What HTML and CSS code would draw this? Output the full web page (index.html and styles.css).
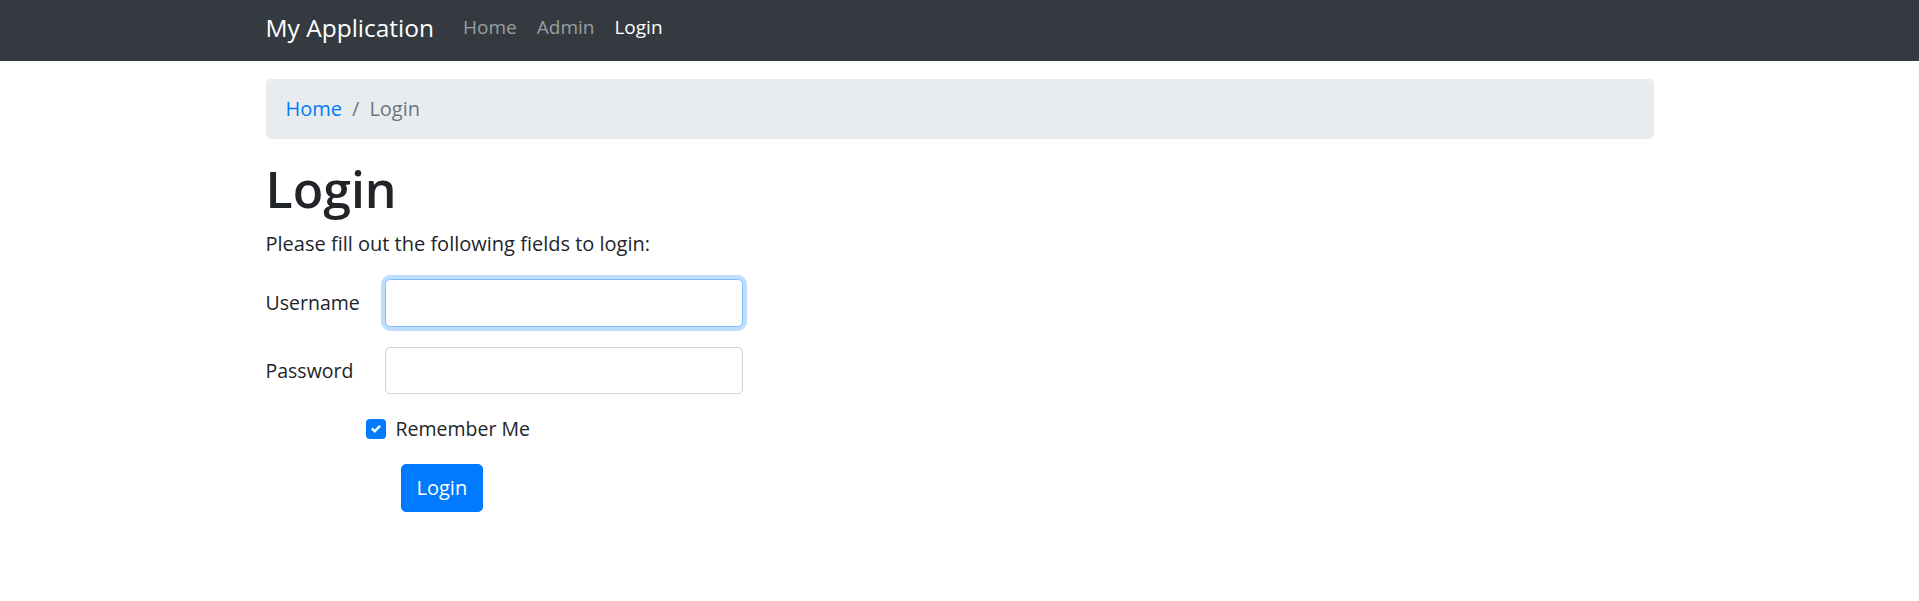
FILE: index.html
```html
<!DOCTYPE html>
<html lang="en">
<head>
<meta charset="utf-8">
<title>Login</title>
<link rel="stylesheet" href="styles.css">
</head>
<body>
<nav class="navbar">
  <div class="container nav-inner">
    <a class="brand" href="#">My Application</a>
    <ul class="nav">
      <li><a class="nav-link" href="#">Home</a></li>
      <li><a class="nav-link" href="#">Admin</a></li>
      <li><a class="nav-link active" href="#">Login</a></li>
    </ul>
  </div>
</nav>
<main class="container">
  <ol class="breadcrumb">
    <li><a href="#">Home</a></li>
    <li class="sep">/</li>
    <li class="current">Login</li>
  </ol>
  <h1 class="title">Login</h1>
  <p class="lead">Please fill out the following fields to login:</p>
  <form class="login-form">
    <div class="form-group">
      <label class="col-label" for="u">Username</label>
      <input class="form-control focused" id="u" type="text">
    </div>
    <div class="form-group">
      <label class="col-label" for="p">Password</label>
      <input class="form-control" id="p" type="password">
    </div>
    <div class="form-group check-row">
      <span class="checkbox"><svg viewBox="0 0 8 8" width="10" height="10"><path fill="#fff" d="M6.564.75l-3.59 3.612-1.538-1.55L0 4.26 2.974 7.25 8 2.193z"/></svg></span>
      <span class="check-label">Remember Me</span>
    </div>
    <div class="form-group btn-row">
      <button class="btn" type="button">Login</button>
    </div>
  </form>
</main>
</body>
</html>
```
FILE: styles.css
```css
* { box-sizing: border-box; }
html, body { margin: 0; padding: 0; }
body {
  font-family: "Open Sans", "Noto Sans", sans-serif;
  font-size: 20px;
  line-height: 1.5;
  color: #212529;
  background: #fff;
}
.container {
  max-width: 1388px;
  margin: 0 auto;
}
.navbar {
  background: #343a40;
  height: 61px;
}
.nav-inner {
  display: flex;
  align-items: center;
  height: 61px;
  padding-bottom: 7px;
}
.brand {
  color: #fff;
  text-decoration: none;
  font-size: 24.5px;
  line-height: 37px;
  margin-right: 19px;
}
.nav {
  display: flex;
  list-style: none;
  margin: 0;
  padding: 0;
}
.nav-link {
  display: block;
  padding: 0 10px;
  font-size: 19px;
  color: rgba(255,255,255,.5);
  text-decoration: none;
  line-height: 30px;
}
.nav-link.active { color: #fff; }
.breadcrumb {
  display: flex;
  list-style: none;
  margin: 18px 0 20px;
  padding: 15px 20px;
  background: #e9ecef;
  border-radius: 5px;
  height: 60px;
}
.breadcrumb a { color: #007bff; text-decoration: none; }
.breadcrumb .sep { color: #6c757d; padding: 0 10px; }
.breadcrumb .current { color: #6c757d; }
.title {
  font-size: 50px;
  font-weight: 600;
  line-height: 1.2;
  margin: 0 0 10px;
}
.lead { margin: 0 0 20px; }
.login-form { display: flex; flex-direction: column; gap: 20px; }
.form-group {
  display: flex;
  align-items: center;
}
.col-label { width: 119px; font-size: 19.5px; }
.form-control {
  width: 358px;
  height: 47.5px;
  border: 1px solid #ced4da;
  border-radius: 5px;
  padding: 7px 15px;
  font: inherit;
  background: #fff;
  outline: none;
}
.form-control.focused {
  border-color: #80bdff;
  box-shadow: 0 0 0 4px rgba(0,123,255,.25);
}
.check-row { padding-left: 100px; height: 30px; }
.checkbox {
  width: 20px;
  height: 20px;
  border-radius: 4px;
  background: #007bff;
  display: flex;
  align-items: center;
  justify-content: center;
  margin-right: 10px;
}
.check-label { font-size: 19.5px; }
.btn-row { padding-left: 135px; }
.btn {
  font: inherit;
  color: #fff;
  background: #007bff;
  border: 1px solid #007bff;
  border-radius: 5px;
  padding: 7.5px 15px;
  line-height: 30px;
  height: 47.5px;
  display: flex;
  align-items: center;
}
```
